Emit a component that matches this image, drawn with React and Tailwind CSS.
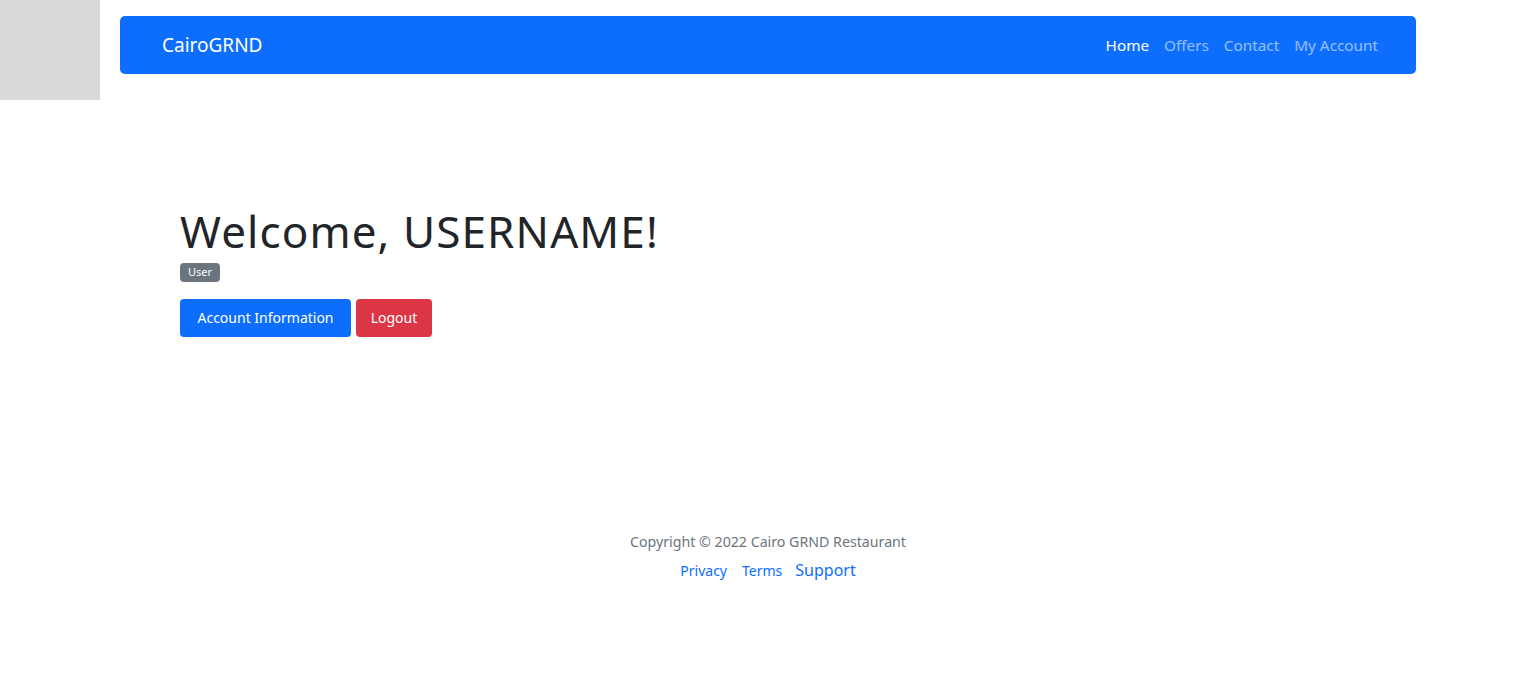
const navLinks = [
  { label: "Home", active: true },
  { label: "Offers" },
  { label: "Contact" },
  { label: "My Account" },
];

const App = () => {
  return (
    <div
      className="relative min-h-[688px] bg-white text-[#212529]"
      style={{ fontFamily: '"Noto Sans", "Open Sans", sans-serif' }}
    >
      {/* placeholder box over the corner */}
      <div className="absolute left-0 top-0 h-[100px] w-[100px] bg-[#d9d9d9]" />

      <div className="mx-auto w-[1320px] px-3 pt-4">
        <nav className="flex h-[58px] items-center justify-between rounded-[5px] bg-[#0d6efd] pl-[42px] pr-[38px]">
          <a className="text-[19px] text-white">CairoGRND</a>
          <ul className="flex gap-[15px] text-[15.3px]">
            {navLinks.map((l) => (
              <li
                key={l.label}
                className={l.active ? "text-white" : "text-white/55"}
              >
                {l.label}
              </li>
            ))}
          </ul>
        </nav>

        <main className="pl-[60px] pt-[131px]">
          <h1 className="text-[44px] leading-[1.2] tracking-[1.1px]">
            Welcome, USERNAME!
          </h1>
          <span className="mt-[1px] inline-flex h-[19px] items-center rounded-[4px] bg-[#6c757d] px-[8px] text-[11px] text-white">
            User
          </span>
          <div className="mt-[17px] flex gap-[5px]">
            <button className="h-[38px] w-[171px] rounded-[4px] bg-[#0d6efd] text-[14px] text-white">
              Account Information
            </button>
            <button className="h-[38px] w-[76px] rounded-[4px] bg-[#dc3545] text-[14px] text-white">
              Logout
            </button>
          </div>
        </main>

        <footer className="mt-[194px] flex flex-col items-center">
          <p className="text-[14.2px] text-[#6c757d]">
            Copyright © 2022 Cairo GRND Restaurant
          </p>
          <div className="mt-[6px] flex items-baseline gap-[15px] text-[#0d6efd]">
            <a className="text-[14px]">Privacy</a>
            <a className="-mr-[2px] text-[14px]">Terms</a>
            <a className="text-[16px]">Support</a>
          </div>
        </footer>
      </div>
    </div>
  );
};

export default App;
